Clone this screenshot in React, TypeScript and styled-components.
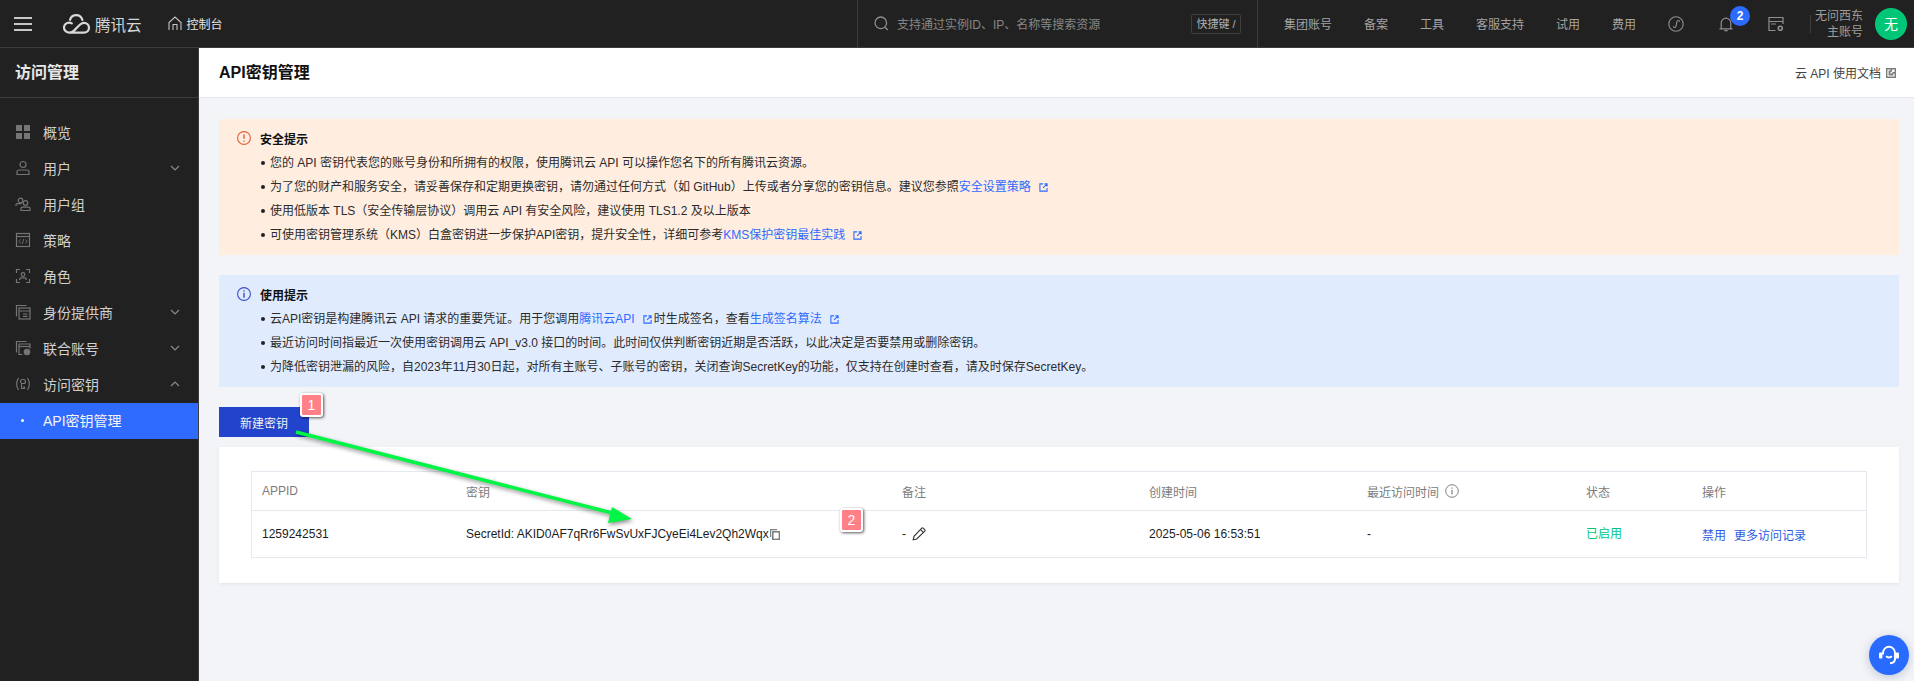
import React from "react";
import styled, { createGlobalStyle } from "styled-components";

const Global = createGlobalStyle`
  html, body { margin: 0; padding: 0; background: #f2f4f8; }
  body { font-family: "Liberation Sans", "Noto Sans CJK SC", sans-serif; font-size: 12px; color: #1b1b1b; overflow: hidden; }
  * { box-sizing: border-box; }
`;

const Page = styled.div`
  position: relative;
  width: 1914px;
  height: 681px;
  display: flex;
  flex-direction: column;
  overflow: hidden;
`;

/* ---------- top bar ---------- */
const TopBar = styled.header`
  height: 48px;
  flex: none;
  display: flex;
  align-items: stretch;
  background: #212121;
  border-bottom: 1px solid #3c3c3c;
  color: #a3a3a3;
`;
const BrandArea = styled.div`
  width: 857px;
  flex: none;
  display: flex;
  align-items: center;
  padding-left: 14px;
`;
const Burger = styled.span`
  width: 18px;
  height: 14px;
  flex: none;
  border-top: 2px solid #c8c8c8;
  border-bottom: 2px solid #c8c8c8;
  position: relative;
  &::after {
    content: "";
    position: absolute;
    left: 0;
    right: 0;
    top: 4px;
    height: 2px;
    background: #c8c8c8;
  }
`;
const LogoMark = styled.svg`
  width: 27px;
  height: 20px;
  margin-left: 31px;
  flex: none;
`;
const LogoText = styled.span`
  margin-left: 5px;
  font-size: 15.5px;
  color: #d4d4d4;
  white-space: nowrap;
`;
const Console = styled.span`
  margin-left: 26px;
  display: flex;
  align-items: center;
  gap: 5px;
  color: #e6e6e6;
  white-space: nowrap;
  svg { width: 14px; height: 15px; }
`;
const SearchArea = styled.div`
  width: 401px;
  flex: none;
  display: flex;
  align-items: center;
  padding: 0 16px;
  border-left: 1px solid #3c3c3c;
  border-right: 1px solid #3c3c3c;
`;
const SearchIcon = styled.svg`
  width: 15px;
  height: 15px;
  flex: none;
`;
const SearchHint = styled.span`
  margin-left: 8px;
  flex: 1;
  color: #878787;
  white-space: nowrap;
`;
const Kbd = styled.span`
  width: 50px;
  height: 20px;
  flex: none;
  border: 1px solid #3e3e3e;
  border-radius: 2px;
  font-size: 11px;
  line-height: 18px;
  text-align: center;
  color: #b0b0b0;
  white-space: nowrap;
`;
const NavArea = styled.nav`
  flex: 1;
  display: flex;
  align-items: center;
  padding-left: 26px;
  padding-right: 7px;
`;
const NavLink = styled.span`
  margin-right: 32px;
  white-space: nowrap;
`;
const NavIcon = styled.span`
  position: relative;
  flex: none;
  width: 16px;
  height: 16px;
  margin-right: 34px;
  display: flex;
  svg { width: 16px; height: 16px; }
`;
const Badge = styled.span`
  position: absolute;
  top: -10px;
  left: 12px;
  width: 20px;
  height: 20px;
  border-radius: 50%;
  background: #2d6bff;
  color: #fff;
  font-size: 12px;
  font-weight: 700;
  line-height: 20px;
  text-align: center;
`;
const VSep = styled.span`
  width: 1px;
  height: 18px;
  margin-left: -8px;
  background: #3c3c3c;
  flex: none;
`;
const Account = styled.span`
  flex: 1;
  text-align: right;
  line-height: 16px;
  color: #9d9d9d;
  white-space: nowrap;
`;
const Avatar = styled.span`
  width: 32px;
  height: 32px;
  margin-left: 12px;
  flex: none;
  border-radius: 50%;
  background: #00c777;
  color: #fff;
  font-size: 14px;
  line-height: 32px;
  text-align: center;
`;

/* ---------- body ---------- */
const Body = styled.div`
  flex: 1;
  display: flex;
  min-height: 0;
`;
const Sidebar = styled.aside`
  width: 199px;
  flex: none;
  background: #212121;
  border-right: 1px solid #3c3c3c;
`;
const SideTitle = styled.div`
  height: 50px;
  padding: 0 0 3px 15px;
  display: flex;
  align-items: center;
  border-bottom: 1px solid #3c3c3c;
  color: #e8e8e8;
  font-size: 16px;
  font-weight: 700;
`;
const SideList = styled.ul`
  list-style: none;
  margin: 0;
  padding: 17px 0 0;
`;
const SideItem = styled.li<{ $active?: boolean }>`
  height: 36px;
  display: flex;
  align-items: center;
  padding: 0 17px 2px 15px;
  font-size: 14px;
  color: ${(p) => (p.$active ? "#f5f5f5" : "#d0d0d0")};
  background: ${(p) => (p.$active ? "#2f6bff" : "transparent")};
  svg.icon { width: 16px; height: 16px; flex: none; }
  svg.chev { width: 12px; height: 12px; flex: none; margin-left: auto; }
`;
const SideLabel = styled.span`
  margin-left: 12px;
`;
const Dot = styled.span`
  width: 3px;
  height: 3px;
  flex: none;
  margin: 0 19px 0 6px;
  background: #fff;
  border-radius: 50%;
`;

const Main = styled.main`
  flex: 1;
  min-width: 0;
  display: flex;
  flex-direction: column;
`;
const PageHead = styled.div`
  height: 50px;
  flex: none;
  background: #fff;
  border-bottom: 1px solid #e6e8ee;
  display: flex;
  align-items: center;
  justify-content: space-between;
  padding: 0 18px 0 20px;
`;
const PageTitle = styled.h1`
  margin: 0 0 3px;
  font-size: 16px;
  font-weight: 700;
  color: #111;
`;
const DocLink = styled.span`
  display: flex;
  align-items: center;
  gap: 5px;
  color: #444;
  svg { width: 10px; height: 10px; }
`;
const Content = styled.div`
  flex: 1;
  padding: 21px 15px 0 20px;
  display: flex;
  flex-direction: column;
  align-items: stretch;
`;
const Notice = styled.section<{ $tone: "warn" | "info" }>`
  background: ${(p) => (p.$tone === "warn" ? "#ffeee0" : "#e1ebfe")};
  padding: 7px 18px 8px;
  margin-bottom: 20px;
`;
const NoticeHead = styled.div`
  height: 24px;
  display: flex;
  align-items: center;
  gap: 9px;
  font-weight: 700;
  color: #111;
  margin-bottom: 1px;
  svg { width: 14px; height: 14px; flex: none; }
`;
const NoticeList = styled.ul`
  list-style: none;
  margin: 0;
  padding: 0 0 0 24px;
`;
const NoticeLine = styled.li`
  position: relative;
  height: 24px;
  line-height: 24px;
  padding-left: 9px;
  color: #2b2b2b;
  white-space: nowrap;
  &::before {
    content: "";
    position: absolute;
    left: 0;
    top: 10px;
    width: 4px;
    height: 4px;
    border-radius: 50%;
    background: #222;
  }
`;
const Link = styled.a`
  color: #2d6bff;
  text-decoration: none;
`;
const Ext = styled.svg`
  width: 9px;
  height: 9px;
  margin: 0 2px 0 8px;
  vertical-align: -1px;
`;
const PrimaryButton = styled.button`
  width: 90px;
  height: 30px;
  flex: none;
  border: 0;
  padding: 0;
  background: #2244cc;
  color: #f0f0f0;
  font: inherit;
  margin-bottom: 10px;
`;
const Card = styled.section`
  background: #fff;
  padding: 24px 32px 25px;
  box-shadow: 0 1px 3px rgba(30, 40, 70, 0.08);
`;
const Table = styled.div`
  border: 1px solid #e6e8f0;
`;
const Row = styled.div<{ $head?: boolean }>`
  height: ${(p) => (p.$head ? "39px" : "46px")};
  display: grid;
  grid-template-columns: 204px 436px 247px 218px 219px 116px 1fr;
  align-items: center;
  color: ${(p) => (p.$head ? "#7c7c7c" : "#1c1c1c")};
  border-bottom: ${(p) => (p.$head ? "1px solid #e6e8f0" : "0")};
`;
const Cell = styled.div`
  padding-left: 10px;
  display: flex;
  align-items: center;
  white-space: nowrap;
  min-width: 0;
`;
const SecretCell = styled(Cell)`
  margin-top: -1px;
`;
const SmallIcon = styled.svg`
  width: 14px;
  height: 14px;
  flex: none;
  margin-left: 6px;
`;
const CopyIcon = styled.svg`
  width: 10px;
  height: 11px;
  flex: none;
  margin: 2px 0 0 1px;
`;
const Enabled = styled.span`
  color: #00c777;
  margin-top: -3px;
`;
const Actions = styled.span`
  display: flex;
  gap: 8px;
  color: #2d5ae0;
`;

/* ---------- annotations (drawn over the page) ---------- */
const Mark = styled.span<{ $x: number; $y: number }>`
  position: absolute;
  left: ${(p) => p.$x}px;
  top: ${(p) => p.$y}px;
  width: 23px;
  height: 24px;
  background: #ff8086;
  border: 2px solid #fff;
  border-radius: 3px;
  box-shadow: 1px 1px 3px rgba(0, 0, 0, 0.65);
  color: #fff;
  font-size: 14px;
  line-height: 20px;
  text-align: center;
`;
const ArrowLayer = styled.svg`
  position: absolute;
  left: 0;
  top: 0;
  width: 1914px;
  height: 681px;
  pointer-events: none;
  filter: drop-shadow(1px 2px 2px rgba(0, 0, 0, 0.45));
`;
const HelpFab = styled.span`
  position: absolute;
  left: 1869px;
  top: 635px;
  width: 40px;
  height: 40px;
  border-radius: 50%;
  background: #2a6bff;
  box-shadow: 0 2px 10px rgba(40, 60, 100, 0.25);
  display: flex;
  align-items: center;
  justify-content: center;
  svg { width: 22px; height: 22px; }
`;

const g = "#757575";
const Ic = ({ children }: { children: React.ReactNode }) => (
  <svg className="icon" viewBox="0 0 16 16" fill="none" stroke={g} strokeWidth="1.2">{children}</svg>
);
const Chev = ({ up }: { up?: boolean }) => (
  <svg className="chev" viewBox="0 0 12 12" fill="none" stroke="#8a8a8a" strokeWidth="1.2">
    <path d={up ? "M2 8l4-4 4 4" : "M2 4l4 4 4-4"} />
  </svg>
);
const ExtIcon = () => (
  <Ext viewBox="0 0 10 10" fill="none" stroke="#2d6bff" strokeWidth="1.2">
    <path d="M4.5 1H1v8h8V5.5M6 1h3v3M9 1L4.5 5.5" />
  </Ext>
);

const sideItems: { label: string; icon: React.ReactNode; chev?: "up" | "down" }[] = [
  { label: "概览", icon: <g fill={g} stroke="none"><rect x="1" y="1" width="6" height="6" /><rect x="9" y="1" width="6" height="6" /><rect x="1" y="9" width="6" height="6" /><rect x="9" y="9" width="6" height="6" /></g> },
  { label: "用户", chev: "down", icon: <><circle cx="8" cy="4.5" r="3" /><path d="M2 14.5v-2.5c0-1.2 1-2 2-2h8c1 0 2 .8 2 2v2.5z" /></> },
  { label: "用户组", icon: <><circle cx="5.5" cy="4.5" r="2.3" /><path d="M1 10v-1c0-.8.7-1.4 1.5-1.4h4" /><circle cx="10.5" cy="7" r="2.3" /><path d="M6 14.5v-2c0-.8.7-1.3 1.5-1.3h6c.8 0 1.5.5 1.5 1.3v2z" /></> },
  { label: "策略", icon: <><rect x="1.5" y="1.5" width="13" height="13" /><path d="M1.5 4.5h13" /><path d="M5.5 7.5L4 9.5l1.5 2M10.5 7.5L12 9.5l-1.5 2M8.7 7L7.3 12" strokeWidth="0.9" /></> },
  { label: "角色", icon: <><path d="M1.5 5V1.5H5M11 1.5h3.5V5M1.5 11v3.5H5M11 14.5h3.5V11" /><circle cx="8" cy="6.5" r="1.8" /><path d="M4.8 12v-1c0-.7.6-1.2 1.2-1.2h4c.6 0 1.2.5 1.2 1.2v1" /></> },
  { label: "身份提供商", chev: "down", icon: <><path d="M1.5 12.5V1.5h10" /><rect x="4" y="4" width="11" height="11" /><path d="M4 7h11M8 10h4.5M8 12.3h4.5" /></> },
  { label: "联合账号", chev: "down", icon: <><path d="M1.5 12.5V1.5h10" /><path d="M7.5 14.5H4V4h11v4.5" /><path d="M4 6.5h11" /><circle cx="12" cy="12" r="3.3" fill={g} stroke="none" /></> },
  { label: "访问密钥", chev: "up", icon: <><path d="M3.5 2C1 6 1 10 3.5 14M12.5 2c2.5 4 2.5 8 0 12" /><rect x="5.5" y="3.5" width="5" height="4" rx="2" /><path d="M6.5 7.5v5h3V11H8" /></> },
];

const navLinks = ["集团账号", "备案", "工具", "客服支持", "试用", "费用"];

export default function App() {
  return (
    <Page>
      <Global />
      <TopBar>
        <BrandArea>
          <Burger />
          <LogoMark viewBox="0 0 27 20" fill="none" stroke="#d8d8d8" strokeWidth="2.2" strokeLinecap="round">
            <path d="M6.5 18.6h14.5c2.9 0 5-2.3 5-4.8 0-2.8-2.2-5-5-5-3 0-4.7 2.4-6.8 4.6l-3 3c-1 1-2.1 2.2-4.7 2.2-3 0-5.5-2.2-5.5-5s2.4-5 5.2-5c1 0 1.9.2 2.6.7" />
            <path d="M7 5.8C7.9 3 10.4 1.2 13.2 1.2c3 0 5.4 1.9 6.2 4.8" />
          </LogoMark>
          <LogoText>腾讯云</LogoText>
          <Console>
            <svg viewBox="0 0 14 15" fill="none" stroke="#c4c4c4" strokeWidth="1.1">
              <path d="M1 14V6.5L7 1l6 5.5V14M5 14V8.5h4V14" />
            </svg>
            控制台
          </Console>
        </BrandArea>
        <SearchArea>
          <SearchIcon viewBox="0 0 15 15" fill="none" stroke="#8c8c8c" strokeWidth="1.3">
            <circle cx="6.8" cy="6.8" r="5.8" /><path d="M10.8 11l3 3" />
          </SearchIcon>
          <SearchHint>支持通过实例ID、IP、名称等搜索资源</SearchHint>
          <Kbd>快捷键 /</Kbd>
        </SearchArea>
        <NavArea>
          {navLinks.map((n) => <NavLink key={n}>{n}</NavLink>)}
          <NavIcon>
            <svg viewBox="0 0 16 16" fill="none" stroke="#8f8f8f" strokeWidth="1.1">
              <circle cx="8" cy="8" r="7.2" />
              <path d="M5.3 10.3c0 1.6 2.3 1.8 2.7-.2l.9-4.2c.4-1.9 2.8-1.7 2.8-.2" />
            </svg>
          </NavIcon>
          <NavIcon>
            <svg viewBox="0 0 16 16" fill="none" stroke="#8f8f8f" strokeWidth="1.2">
              <path d="M1.5 12.8h13M3.2 12.8V7a4.8 4.8 0 0 1 9.6 0v5.8M6.3 14.6h3.4" />
            </svg>
            <Badge>2</Badge>
          </NavIcon>
          <NavIcon>
            <svg viewBox="0 0 16 16" fill="none" stroke="#8f8f8f" strokeWidth="1.2">
              <path d="M7.5 14.5H1V1.5h14V8M1 5.5h14M3 8h5" />
              <circle cx="12.3" cy="12.3" r="2" strokeWidth="1.6" />
            </svg>
          </NavIcon>
          <VSep />
          <Account>无问西东<br />主账号</Account>
          <Avatar>无</Avatar>
        </NavArea>
      </TopBar>
      <Body>
        <Sidebar>
          <SideTitle>访问管理</SideTitle>
          <SideList>
            {sideItems.map((it) => (
              <SideItem key={it.label}>
                <Ic>{it.icon}</Ic>
                <SideLabel>{it.label}</SideLabel>
                {it.chev && <Chev up={it.chev === "up"} />}
              </SideItem>
            ))}
            <SideItem $active>
              <Dot />
              API密钥管理
            </SideItem>
          </SideList>
        </Sidebar>
        <Main>
          <PageHead>
            <PageTitle>API密钥管理</PageTitle>
            <DocLink>
              云 API 使用文档
              <svg viewBox="0 0 10 10"><path fill="#7c7c7c" d="M0 0h10v10H0z" /><path fill="none" stroke="#fff" strokeWidth="1.2" d="M4.5 2H2v6h6V5.5M6 2h2v2M8 2L4.5 5.5" /></svg>
            </DocLink>
          </PageHead>
          <Content>
            <Notice $tone="warn">
              <NoticeHead>
                <svg viewBox="0 0 14 14" fill="none" stroke="#e2623c" strokeWidth="1.1"><circle cx="7" cy="7" r="6.4" /><path d="M7 3.2v4.6M7 9.4v1.3" strokeWidth="1.4" /></svg>
                安全提示
              </NoticeHead>
              <NoticeList>
                <NoticeLine>您的 API 密钥代表您的账号身份和所拥有的权限，使用腾讯云 API 可以操作您名下的所有腾讯云资源。</NoticeLine>
                <NoticeLine>为了您的财产和服务安全，请妥善保存和定期更换密钥，请勿通过任何方式（如 GitHub）上传或者分享您的密钥信息。建议您参照<Link>安全设置策略</Link><ExtIcon /></NoticeLine>
                <NoticeLine>使用低版本 TLS（安全传输层协议）调用云 API 有安全风险，建议使用 TLS1.2 及以上版本</NoticeLine>
                <NoticeLine>可使用密钥管理系统（KMS）白盒密钥进一步保护API密钥，提升安全性，详细可参考<Link>KMS保护密钥最佳实践</Link><ExtIcon /></NoticeLine>
              </NoticeList>
            </Notice>
            <Notice $tone="info">
              <NoticeHead>
                <svg viewBox="0 0 14 14" fill="none" stroke="#3a4fc4" strokeWidth="1.1"><circle cx="7" cy="7" r="6.4" /><path d="M7 5.8v5M7 3.2v1.3" strokeWidth="1.4" /></svg>
                使用提示
              </NoticeHead>
              <NoticeList>
                <NoticeLine>云API密钥是构建腾讯云 API 请求的重要凭证。用于您调用<Link>腾讯云API</Link><ExtIcon />时生成签名，查看<Link>生成签名算法</Link><ExtIcon /></NoticeLine>
                <NoticeLine>最近访问时间指最近一次使用密钥调用云 API_v3.0 接口的时间。此时间仅供判断密钥近期是否活跃，以此决定是否要禁用或删除密钥。</NoticeLine>
                <NoticeLine>为降低密钥泄漏的风险，自2023年11月30日起，对所有主账号、子账号的密钥，关闭查询SecretKey的功能，仅支持在创建时查看，请及时保存SecretKey。</NoticeLine>
              </NoticeList>
            </Notice>
            <PrimaryButton>新建密钥</PrimaryButton>
            <Card>
              <Table>
                <Row $head>
                  <Cell>APPID</Cell>
                  <Cell>密钥</Cell>
                  <Cell>备注</Cell>
                  <Cell>创建时间</Cell>
                  <Cell>
                    最近访问时间
                    <SmallIcon viewBox="0 0 14 14" fill="none" stroke="#7f7f7f" strokeWidth="1"><circle cx="7" cy="7" r="6.3" /><path d="M7 6v4.5M7 3.4v1.3" strokeWidth="1.2" /></SmallIcon>
                  </Cell>
                  <Cell>状态</Cell>
                  <Cell>操作</Cell>
                </Row>
                <Row>
                  <Cell>1259242531</Cell>
                  <SecretCell>
                    SecretId: AKID0AF7qRr6FwSvUxFJCyeEi4Lev2Qh2Wqx
                    <CopyIcon viewBox="0 0 10 11" fill="none" stroke="#7f7f7f" strokeWidth="1.2"><path d="M.6 8V.6H7" /><rect x="2.8" y="2.8" width="6.6" height="7.6" strokeWidth="1.6" /></CopyIcon>
                  </SecretCell>
                  <Cell>
                    -
                    <SmallIcon viewBox="0 0 14 14" fill="none" stroke="#333" strokeWidth="1.1"><path d="M1.2 12.8l.8-3.5L9.8 1.2a1 1 0 0 1 1.4 0l1.6 1.6a1 1 0 0 1 0 1.4L4.7 12z" /><path d="M8.5 2.6l3 3" /></SmallIcon>
                  </Cell>
                  <Cell>2025-05-06 16:53:51</Cell>
                  <Cell>-</Cell>
                  <Cell><Enabled>已启用</Enabled></Cell>
                  <Cell><Actions><span>禁用</span><span>更多访问记录</span></Actions></Cell>
                </Row>
              </Table>
            </Card>
          </Content>
        </Main>
      </Body>
      <ArrowLayer viewBox="0 0 1914 681">
        <line x1="296" y1="432" x2="620" y2="515" stroke="#00f545" strokeWidth="3.5" />
        <path d="M632 519L612 507L608 523Z" fill="#00f545" />
      </ArrowLayer>
      <Mark $x={300} $y={393}>1</Mark>
      <Mark $x={840} $y={508}>2</Mark>
      <HelpFab>
        <svg viewBox="0 0 22 22" fill="none" stroke="#fff" strokeWidth="1.9">
          <path d="M5 10.5V8.8a6 6 0 0 1 12 0V15c0 2.6-2 4-5 4.2" />
          <rect x="1" y="8.5" width="3.4" height="6" rx="1" fill="#fff" stroke="none" />
          <rect x="17.6" y="8.5" width="3.4" height="6" rx="1" fill="#fff" stroke="none" />
          <path d="M8.2 12.2c1.4 1.7 4.2 1.7 5.6 0" />
        </svg>
      </HelpFab>
    </Page>
  );
}
